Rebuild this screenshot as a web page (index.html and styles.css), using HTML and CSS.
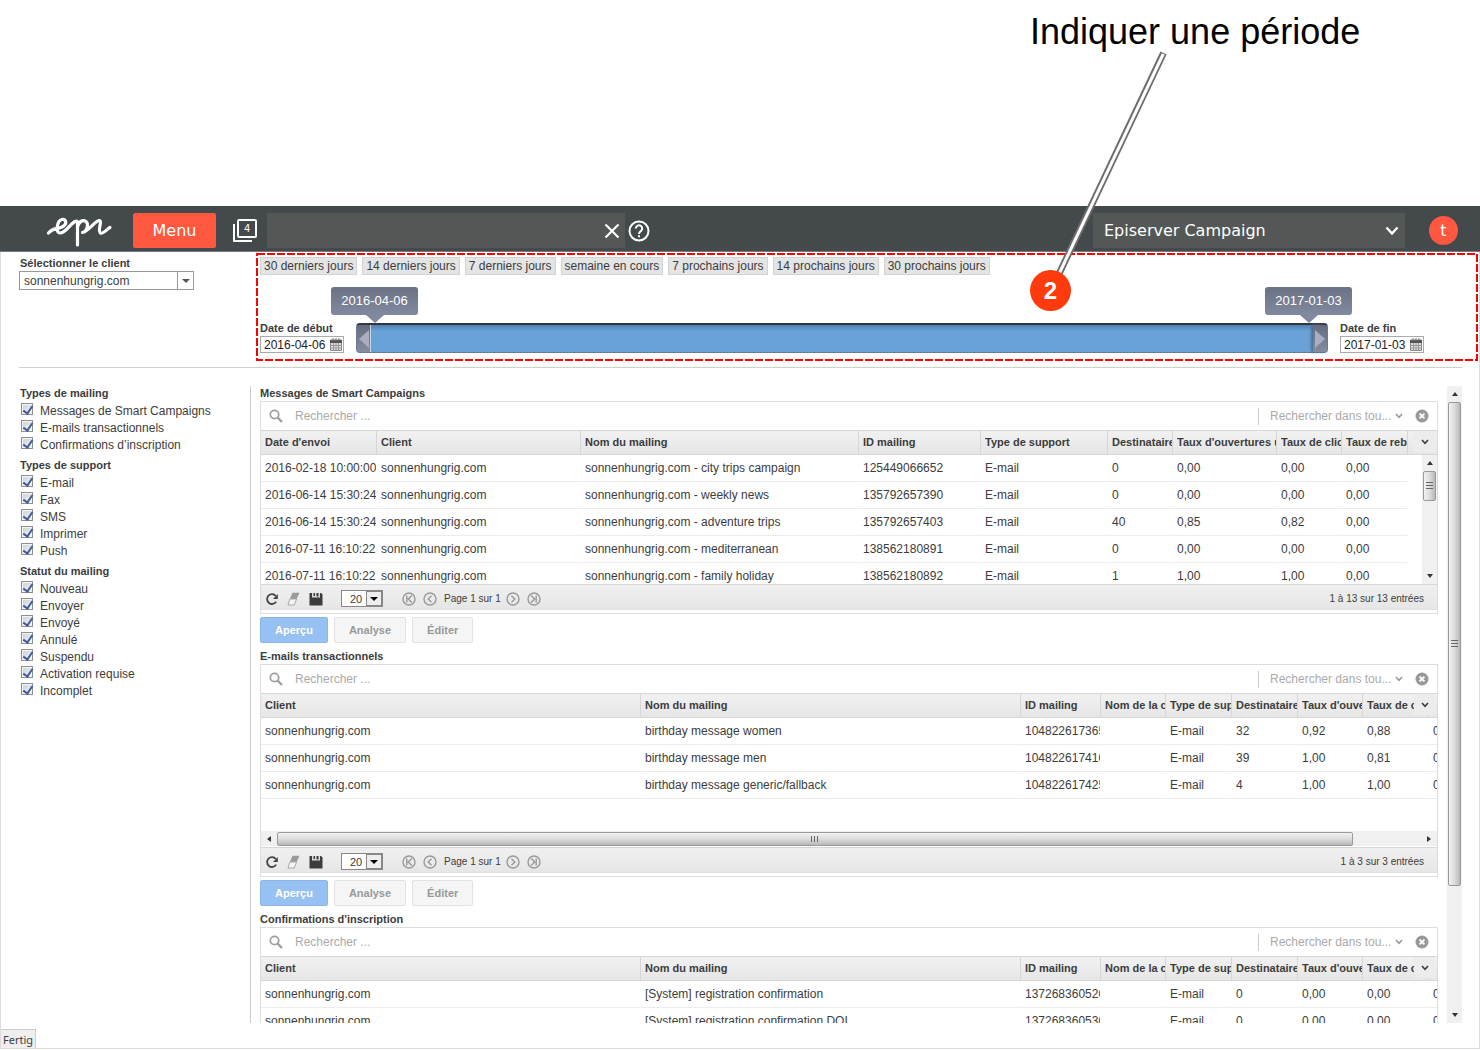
FILE: index.html
```html
<!DOCTYPE html>
<html lang="fr">
<head>
<meta charset="utf-8">
<title>Episerver Campaign</title>
<link rel="stylesheet" href="styles.css">
</head>
<body>
<svg class="sprite" aria-hidden="true">
  <symbol id="i-search" viewBox="0 0 14 14"><circle cx="5.5" cy="5.5" r="4.2" fill="none" stroke="#a0a0a0" stroke-width="1.8"/><path d="M8.6 8.6L13 13" stroke="#a0a0a0" stroke-width="2.4"/></symbol>
  <symbol id="i-clear" viewBox="0 0 14 14"><circle cx="7" cy="7" r="6.5" fill="#999"/><path d="M4.6 4.6l4.8 4.8M9.4 4.6l-4.8 4.8" stroke="#fff" stroke-width="2"/></symbol>
  <symbol id="i-chev" viewBox="0 0 8 6"><path d="M1 1l3 3.4L7 1" fill="none" stroke="currentColor" stroke-width="1.6"/></symbol>
  <symbol id="i-reload" viewBox="0 0 14 14"><path d="M11.2 9.6A4.9 4.9 0 1 1 10.8 4" fill="none" stroke="#444" stroke-width="1.8"/><path d="M12.8 2v5H8z" fill="#444"/></symbol>
  <symbol id="i-erase" viewBox="0 0 14 14"><path d="M5.5 .8h7L9.6 7H2.8z" fill="#9a9a9a"/><path d="M2.8 7h6.8L7.2 13H1z" fill="#f4f4f4" stroke="#aaa"/></symbol>
  <symbol id="i-save" viewBox="0 0 14 14"><path d="M.5 1h11.500L13.500 2.500V13.500H.5z" fill="#3c3c3c"/><path d="M3 1h8v4.500H3z" fill="#ddd"/><path d="M4.500 1h1.500v3h-1.500zM7.500 1h2v3.500h-2z" fill="#3c3c3c"/></symbol>
  <symbol id="i-first" viewBox="0 0 14 14"><g fill="none" stroke="#999" stroke-width="1.400"><circle cx="7" cy="7" r="6"/><path d="M4.800 3.500v7M9.800 3.500L6.300 7l3.500 3.500"/></g></symbol>
  <symbol id="i-prev" viewBox="0 0 14 14"><g fill="none" stroke="#999" stroke-width="1.400"><circle cx="7" cy="7" r="6"/><path d="M8.500 3.800L5.200 7l3.300 3.200"/></g></symbol>
  <symbol id="i-next" viewBox="0 0 14 14"><g fill="none" stroke="#999" stroke-width="1.400"><circle cx="7" cy="7" r="6"/><path d="M5.500 3.800L8.800 7l-3.300 3.200"/></g></symbol>
  <symbol id="i-last" viewBox="0 0 14 14"><g fill="none" stroke="#999" stroke-width="1.400"><circle cx="7" cy="7" r="6"/><path d="M9.200 3.500v7M4.200 3.500L7.700 7l-3.500 3.500"/></g></symbol>
  <symbol id="i-cal" viewBox="0 0 12 13"><path d="M.5 2h11v10.500H.5z" fill="#ddd" stroke="#888"/><path d="M0 2h12v3H0z" fill="#555"/><path d="M3 0v3M9 0v3M6 0v3" stroke="#777"/><path d="M3.500 5v7M6 5v7M8.500 5v7M1 7.500h10M1 10h10" stroke="#999"/></symbol>
</svg>

<header class="callout">
  <div class="callout-box">
    <p class="callout-text">Indiquer une période</p>
    <svg class="callout-line" viewBox="0 0 150 270" aria-hidden="true">
      <path d="M133.500 53L29 274" stroke="#6c6c6c" stroke-width="6.800"/>
      <path d="M133.200 54L29 274" stroke="#fff" stroke-width="3"/>
    </svg>
    <span class="callout-num">2</span>
  </div>
</header>

<nav class="topbar">
  <a class="logo" href="#" aria-label="epi">
    <svg width="80" height="42" viewBox="0 0 80 42" fill="none" stroke="#fff" stroke-width="3.200" stroke-linecap="round" stroke-linejoin="round"><path d="M8.500 23C14 17 16 20 22 17C28 14 26 9 22 9.500C17 10.500 15 23 20 23C26 23 30 14 35 11.500Q38 10 37.500 14V35M37.500 17C39 11 43 9.500 46 11.500C49 14 47 22 42.500 22.500C49 21 55 11 59 10.500C63 10 57 21 60.500 23C63 24.500 67 19 70 17.500"/></svg>
  </a>
  <button class="menu-btn">Menu</button>
  <svg class="pages" width="26" height="26" viewBox="0 0 26 26" fill="none" stroke="#fff" stroke-width="2" stroke-linejoin="round"><rect x="6" y="2" width="18" height="17" rx="1"/><path d="M2 6v17h18"/><text x="12" y="14" font-family="DejaVu Sans" font-size="10" fill="#fff" stroke="none">4</text></svg>
  <div class="top-search">
    <input type="text" aria-label="Recherche">
    <button class="plain" aria-label="Effacer"><svg width="16" height="16" viewBox="0 0 16 16"><path d="M1.500 1.500l13 13M14.500 1.500l-13 13" stroke="#fff" stroke-width="2.200"/></svg></button>
  </div>
  <button class="plain help" aria-label="Aide"><svg width="22" height="22" viewBox="0 0 22 22" fill="none" stroke="#fff" stroke-width="2"><circle cx="11" cy="11" r="9.500"/><path d="M7.800 8.600a3.200 3.200 0 1 1 5 2.600c-1.300.9-1.800 1.300-1.800 2.800"/><path d="M11 15.200v2"/></svg></button>
  <div class="product">
    <select aria-label="Produit"><option>Episerver Campaign</option></select>
    <svg width="14" height="10" viewBox="0 0 14 10"><path d="M1.500 1.500L7 7.500l5.500-6" fill="none" stroke="#fff" stroke-width="2.400"/></svg>
  </div>
  <button class="avatar">t</button>
</nav>

<main class="app">
  <div class="filters">
    <div class="client">
      <label class="cap" for="client">Sélectionner le client</label>
      <div class="combo"><select id="client"><option>sonnenhungrig.com</option></select><span class="combo-arrow"></span></div>
    </div>
    <section class="period">
      <svg class="dash" aria-hidden="true"><rect x="1" y="1"/></svg>
      <div class="ranges">
        <button>30 derniers jours</button><button>14 derniers jours</button><button>7 derniers jours</button><button>semaine en cours</button><button>7 prochains jours</button><button>14 prochains jours</button><button>30 prochains jours</button>
      </div>
      <div class="slider-row">
        <div class="date"><label class="cap" for="d1">Date de début</label><div class="date-box"><input id="d1" type="text" value="2016-04-06"><svg width="12" height="13"><use href="#i-cal"/></svg></div></div>
        <div class="track">
          <output class="tip tip-start">2016-04-06</output>
          <output class="tip tip-end">2017-01-03</output>
          <button class="handle" aria-label="Début"><svg width="10" height="18" viewBox="0 0 10 18"><path d="M10 0v18L0 9z" fill="#a9afc0"/></svg></button>
          <button class="handle handle-end" aria-label="Fin"><svg width="10" height="18" viewBox="0 0 10 18"><path d="M0 0v18L10 9z" fill="#a9afc0"/></svg></button>
        </div>
        <div class="date"><label class="cap" for="d2">Date de fin</label><div class="date-box"><input id="d2" type="text" value="2017-01-03"><svg width="12" height="13"><use href="#i-cal"/></svg></div></div>
      </div>
    </section>
  </div>
  <hr class="rule">

  <div class="workspace">
    <aside class="side">
      <fieldset><legend>Types de mailing</legend>
        <label><input type="checkbox" checked>Messages de Smart Campaigns</label>
        <label><input type="checkbox" checked>E-mails transactionnels</label>
        <label><input type="checkbox" checked>Confirmations d’inscription</label>
      </fieldset>
      <fieldset><legend>Types de support</legend>
        <label><input type="checkbox" checked>E-mail</label>
        <label><input type="checkbox" checked>Fax</label>
        <label><input type="checkbox" checked>SMS</label>
        <label><input type="checkbox" checked>Imprimer</label>
        <label><input type="checkbox" checked>Push</label>
      </fieldset>
      <fieldset><legend>Statut du mailing</legend>
        <label><input type="checkbox" checked>Nouveau</label>
        <label><input type="checkbox" checked>Envoyer</label>
        <label><input type="checkbox" checked>Envoyé</label>
        <label><input type="checkbox" checked>Annulé</label>
        <label><input type="checkbox" checked>Suspendu</label>
        <label><input type="checkbox" checked>Activation requise</label>
        <label><input type="checkbox" checked>Incomplet</label>
      </fieldset>
    </aside>

    <div class="lists">
      <section class="list">
        <h2>Messages de Smart Campaigns</h2>
        <div class="grid">
          <div class="find">
            <svg width="14" height="14"><use href="#i-search"/></svg>
            <input type="text" placeholder="Rechercher ..." aria-label="Rechercher">
            <div class="scope"><select aria-label="Champ"><option>Rechercher dans tou...</option></select><svg width="8" height="6"><use href="#i-chev"/></svg></div>
            <button class="plain" aria-label="Effacer"><svg width="14" height="14"><use href="#i-clear"/></svg></button>
          </div>
          <div class="view">
            <table>
              <colgroup><col class="w116"><col class="w204"><col><col class="w122"><col class="w127"><col class="w65"><col class="w104"><col class="w65"><col class="w66"><col class="w29"></colgroup>
              <thead><tr><th>Date d'envoi</th><th>Client</th><th>Nom du mailing</th><th>ID mailing</th><th>Type de support</th><th>Destinataires</th><th>Taux d'ouvertures uniques</th><th>Taux de clics</th><th>Taux de rebonds</th><th></th></tr></thead>
              <tbody>
                <tr><td>2016-02-18 10:00:00</td><td>sonnenhungrig.com</td><td>sonnenhungrig.com - city trips campaign</td><td>125449066652</td><td>E-mail</td><td>0</td><td>0,00</td><td>0,00</td><td>0,00</td></tr>
                <tr><td>2016-06-14 15:30:24</td><td>sonnenhungrig.com</td><td>sonnenhungrig.com - weekly news</td><td>135792657390</td><td>E-mail</td><td>0</td><td>0,00</td><td>0,00</td><td>0,00</td></tr>
                <tr><td>2016-06-14 15:30:24</td><td>sonnenhungrig.com</td><td>sonnenhungrig.com - adventure trips</td><td>135792657403</td><td>E-mail</td><td>40</td><td>0,85</td><td>0,82</td><td>0,00</td></tr>
                <tr><td>2016-07-11 16:10:22</td><td>sonnenhungrig.com</td><td>sonnenhungrig.com - mediterranean</td><td>138562180891</td><td>E-mail</td><td>0</td><td>0,00</td><td>0,00</td><td>0,00</td></tr>
                <tr><td>2016-07-11 16:10:22</td><td>sonnenhungrig.com</td><td>sonnenhungrig.com - family holiday</td><td>138562180892</td><td>E-mail</td><td>1</td><td>1,00</td><td>1,00</td><td>0,00</td></tr>
              </tbody>
            </table>
            <button class="plain cols" aria-label="Colonnes"><svg width="8" height="6"><use href="#i-chev"/></svg></button>
            <div class="vbar inner"><span class="tri up"></span><span class="thumb short"><i class="grip"></i></span><span class="tri down"></span></div>
          </div>
          <div class="tools">
            <button class="plain" aria-label="Actualiser"><svg width="14" height="14"><use href="#i-reload"/></svg></button>
            <button class="plain" aria-label="Vider"><svg width="14" height="14"><use href="#i-erase"/></svg></button>
            <button class="plain" aria-label="Enregistrer"><svg width="14" height="14"><use href="#i-save"/></svg></button>
            <div class="size"><select aria-label="Lignes"><option>20</option></select><span class="size-arrow"></span></div>
            <div class="pager"><button class="plain" aria-label="Première"><svg width="14" height="14"><use href="#i-first"/></svg></button><button class="plain" aria-label="Précédente"><svg width="14" height="14"><use href="#i-prev"/></svg></button><span>Page 1 sur 1</span><button class="plain" aria-label="Suivante"><svg width="14" height="14"><use href="#i-next"/></svg></button><button class="plain last" aria-label="Dernière"><svg width="14" height="14"><use href="#i-last"/></svg></button></div>
            <span class="count">1 à 13 sur 13 entrées</span>
          </div>
        </div>
        <div class="actions"><button class="main">Aperçu</button><button>Analyse</button><button>Éditer</button></div>
      </section>

      <section class="list">
        <h2>E-mails transactionnels</h2>
        <div class="grid">
          <div class="find">
            <svg width="14" height="14"><use href="#i-search"/></svg>
            <input type="text" placeholder="Rechercher ..." aria-label="Rechercher">
            <div class="scope"><select aria-label="Champ"><option>Rechercher dans tou...</option></select><svg width="8" height="6"><use href="#i-chev"/></svg></div>
            <button class="plain" aria-label="Effacer"><svg width="14" height="14"><use href="#i-clear"/></svg></button>
          </div>
          <div class="view">
            <table class="wide">
              <colgroup><col><col><col class="w80"><col class="w65"><col class="w66"><col class="w66"><col class="w65"><col class="w66"><col class="w65"></colgroup>
              <thead><tr><th>Client</th><th>Nom du mailing</th><th>ID mailing</th><th>Nom de la campagne</th><th>Type de support</th><th>Destinataires</th><th>Taux d'ouvertures</th><th>Taux de clics</th><th></th></tr></thead>
              <tbody>
                <tr><td>sonnenhungrig.com</td><td>birthday message women</td><td>104822617365</td><td></td><td>E-mail</td><td>32</td><td>0,92</td><td>0,88</td><td>0,00</td></tr>
                <tr><td>sonnenhungrig.com</td><td>birthday message men</td><td>104822617410</td><td></td><td>E-mail</td><td>39</td><td>1,00</td><td>0,81</td><td>0,00</td></tr>
                <tr><td>sonnenhungrig.com</td><td>birthday message generic/fallback</td><td>104822617425</td><td></td><td>E-mail</td><td>4</td><td>1,00</td><td>1,00</td><td>0,00</td></tr>
              </tbody>
            </table>
            <button class="plain cols" aria-label="Colonnes"><svg width="8" height="6"><use href="#i-chev"/></svg></button>
            <div class="hbar"><span class="tri left"></span><span class="hthumb"><i class="grip side-grip"></i></span><span class="tri right"></span></div>
          </div>
          <div class="tools">
            <button class="plain" aria-label="Actualiser"><svg width="14" height="14"><use href="#i-reload"/></svg></button>
            <button class="plain" aria-label="Vider"><svg width="14" height="14"><use href="#i-erase"/></svg></button>
            <button class="plain" aria-label="Enregistrer"><svg width="14" height="14"><use href="#i-save"/></svg></button>
            <div class="size"><select aria-label="Lignes"><option>20</option></select><span class="size-arrow"></span></div>
            <div class="pager"><button class="plain" aria-label="Première"><svg width="14" height="14"><use href="#i-first"/></svg></button><button class="plain" aria-label="Précédente"><svg width="14" height="14"><use href="#i-prev"/></svg></button><span>Page 1 sur 1</span><button class="plain" aria-label="Suivante"><svg width="14" height="14"><use href="#i-next"/></svg></button><button class="plain last" aria-label="Dernière"><svg width="14" height="14"><use href="#i-last"/></svg></button></div>
            <span class="count">1 à 3 sur 3 entrées</span>
          </div>
        </div>
        <div class="actions"><button class="main">Aperçu</button><button>Analyse</button><button>Éditer</button></div>
      </section>

      <section class="list">
        <h2>Confirmations d'inscription</h2>
        <div class="grid">
          <div class="find">
            <svg width="14" height="14"><use href="#i-search"/></svg>
            <input type="text" placeholder="Rechercher ..." aria-label="Rechercher">
            <div class="scope"><select aria-label="Champ"><option>Rechercher dans tou...</option></select><svg width="8" height="6"><use href="#i-chev"/></svg></div>
            <button class="plain" aria-label="Effacer"><svg width="14" height="14"><use href="#i-clear"/></svg></button>
          </div>
          <div class="view">
            <table class="wide">
              <colgroup><col><col><col class="w80"><col class="w65"><col class="w66"><col class="w66"><col class="w65"><col class="w66"><col class="w65"></colgroup>
              <thead><tr><th>Client</th><th>Nom du mailing</th><th>ID mailing</th><th>Nom de la campagne</th><th>Type de support</th><th>Destinataires</th><th>Taux d'ouvertures</th><th>Taux de clics</th><th></th></tr></thead>
              <tbody>
                <tr><td>sonnenhungrig.com</td><td>[System] registration confirmation</td><td>137268360520</td><td></td><td>E-mail</td><td>0</td><td>0,00</td><td>0,00</td><td>0,00</td></tr>
                <tr><td>sonnenhungrig.com</td><td>[System] registration confirmation DOI</td><td>137268360530</td><td></td><td>E-mail</td><td>0</td><td>0,00</td><td>0,00</td><td>0,00</td></tr>
              </tbody>
            </table>
            <button class="plain cols" aria-label="Colonnes"><svg width="8" height="6"><use href="#i-chev"/></svg></button>
          </div>
        </div>
      </section>
    </div>

    <div class="vbar outer"><span class="tri up"></span><span class="thumb long"><i class="grip"></i></span><span class="tri down"></span></div>
  </div>
  <footer class="status"><span>Fertig</span></footer>
</main>
</body>
</html>
```
FILE: styles.css
```css
* { box-sizing: border-box; }
body {
  margin: 0;
  height: 100vh;
  padding-bottom: 1px;
  display: flex;
  flex-direction: column;
  background: #fff;
  color: #3c3c3c;
  font: 12px/16px "Liberation Sans", Arial, sans-serif;
}
button, input, select { font: inherit; color: inherit; margin: 0; }
select { appearance: none; border: 0; padding: 0; background: transparent; outline: 0; border-radius: 0; }
svg { display: block; flex: none; }
.sprite { position: absolute; width: 0; height: 0; }
.plain { border: 0; padding: 0; background: none; display: flex; flex: none; }

/* Annotation */
.callout { height: 206px; flex: none; display: flex; justify-content: flex-end; padding-right: 119px; }
.callout-box { position: relative; width: 331px; }
.callout-text { margin: 0; padding-top: 11px; font-size: 36px; line-height: 42px; color: #000; white-space: nowrap; }
.callout-line { position: absolute; left: 0; top: 0; width: 150px; height: 270px; overflow: visible; z-index: 5; }
.callout-num {
  position: absolute; left: 0; top: 270px; z-index: 6;
  width: 41px; height: 41px; border-radius: 50%;
  background: #ff3a0c; color: #fff; font-weight: bold; font-size: 24px; line-height: 42px; text-align: center;
}

/* Top bar */
.topbar {
  flex: none; height: 46px; display: flex; align-items: center; padding: 4px 22px 0 40px;
  background: #44494b; border-bottom: 1px solid #777b7c;
  font-family: "DejaVu Sans", Verdana, sans-serif; font-size: 16px; color: #fff;
}
.logo { margin-right: 13px; }
.menu-btn { width: 83px; height: 35px; border: 0; border-radius: 2px; background: #ff5740; }
.pages { margin-left: 16px; }
.top-search { margin-left: 9px; width: 358px; height: 35px; background: #535756; display: flex; align-items: center; padding-right: 5px; }
.top-search input { flex: 1; min-width: 0; height: 35px; border: 0; background: none; }
.help { margin-left: 3px; }
.product { margin-left: auto; width: 312px; height: 35px; background: #535756; display: flex; align-items: center; padding: 0 6px 0 11px; }
.product select { flex: 1; min-width: 0; }
.avatar { margin-left: 24px; width: 29px; height: 29px; border: 0; padding: 0; border-radius: 50%; background: #ff5740; line-height: 29px; }

/* Frame */
.app { flex: 1; min-height: 0; display: flex; flex-direction: column; border: 1px solid #dcdcdc; border-top: 0; }
.cap { display: block; font-size: 11px; line-height: 15px; font-weight: bold; white-space: nowrap; }

/* Filters */
.filters { flex: none; display: grid; grid-template-columns: 255px 1fr; padding: 1px 1px 0 0; }
.client { padding: 3px 0 0 18px; }
.client .cap { padding-left: 1px; }
.combo { width: 175px; height: 19px; border: 1px solid #999; display: flex; }
.combo select { flex: 1; padding-left: 4px; }
.combo-arrow { width: 16px; border-left: 1px solid #999; display: grid; place-items: center; }
.combo-arrow::after { content: ""; border: 4px solid transparent; border-top-color: #555; border-bottom: 0; }
.period { position: relative; height: 108px; padding: 4px 4px 8px; display: flex; flex-direction: column; justify-content: space-between; }
.dash { position: absolute; inset: 0; width: 100%; height: 100%; pointer-events: none; }
.dash rect { width: calc(100% - 2px); height: calc(100% - 2px); fill: none; stroke: #f00; stroke-width: 2; stroke-dasharray: 8 2; }
.ranges { display: flex; gap: 5px; }
.ranges button { height: 18px; padding: 0 3px; border: 1px solid #d3d3d3; background: #e4e4e4; line-height: 16px; white-space: nowrap; }
.slider-row { display: flex; align-items: flex-end; padding-right: 50px; }
.date { flex: none; }
.date-box { width: 84px; height: 17px; border: 1px solid #aaa; display: flex; align-items: center; justify-content: space-between; padding: 0 1px 0 3px; color: #222; }
.date-box input { width: 64px; border: 0; padding: 0; background: none; height: 15px; }
.track {
  position: relative; flex: 1; height: 30px; margin: 0 12px; border-radius: 4px;
  display: flex; justify-content: space-between; border: 1px solid #6a7a92; border-top: 2px solid #33383f;
  background: linear-gradient(#4d80b0, #69a2d8 6px, #69a2d8);
}
.handle { width: 14px; padding: 0; border: 0; border-right: 1px solid #cfd5e0; border-radius: 3px 0 0 3px; background: linear-gradient(#646c7e, #858ca0); display: grid; place-items: center; }
.handle-end { border-right: 0; border-radius: 0 3px 3px 0; box-shadow: -2px 0 3px #4d6c90; }
.tip { position: absolute; bottom: 37px; width: 87px; height: 28px; border-radius: 3px; background: linear-gradient(#6a7284, #8189a0); color: #fff; font-size: 13px; text-align: center; line-height: 28px; }
.tip::after { content: ""; position: absolute; left: 35px; top: 100%; border: 9px solid transparent; border-top: 8px solid #8189a0; border-bottom: 0; }
.tip-start { left: -26px; }
.tip-end { right: -25px; }
.rule { flex: none; width: auto; margin: 6px 17px 18px 18px; border: 0; border-top: 1px solid #d0d0d0; align-self: stretch; }

/* Workspace */
.workspace { flex: 1; min-height: 0; display: flex; overflow: hidden; padding-right: 17px; }
.side { flex: none; width: 249px; padding-left: 19px; }
.side fieldset { border: 0; margin: 0 0 4px; padding: 0; min-width: 0; }
.side legend { padding: 0; margin-bottom: 2px; font-size: 11px; line-height: 15px; font-weight: bold; }
.side label { display: flex; gap: 7px; height: 17px; line-height: 17px; padding-left: 1px; }
.side input { appearance: none; position: relative; width: 12px; height: 12px; border: 1px solid #8e8f8f; background: linear-gradient(135deg, #c8ced6, #f6f6f6); box-shadow: inset 0 0 0 1px #f4f4f4; }
.side input:checked::after { content: ""; position: absolute; left: 3px; top: 0; width: 4px; height: 8px; border: solid #3c5c9c; border-width: 0 2px 2px 0; transform: rotate(35deg); }
.lists { flex: 1; min-width: 0; overflow: hidden; border-left: 1px solid #ccc; padding: 0 9px; }
.list h2 { margin: 0; font-size: 11px; line-height: 15px; }
.grid { border: 1px solid #ddd; padding-bottom: 3px; }
.find { height: 28px; display: flex; align-items: center; padding: 0 8px; }
.find > input { flex: 1; min-width: 0; border: 0; padding: 0; margin-left: 12px; background: none; outline: 0; }
.find > input::placeholder { color: #aaa; opacity: 1; }
.scope { display: flex; align-items: center; gap: 1px; margin-right: 12px; padding-left: 11px; height: 17px; border-left: 1px solid #ccc; color: #aaa; }
.scope select { width: 124px; }
.scope svg { color: #999; }
.view { position: relative; height: 154px; overflow: hidden; }
table { width: 100%; table-layout: fixed; border-collapse: separate; border-spacing: 0; }
table.wide { width: calc(100% + 57px); }
th, td { padding: 0 0 0 4px; overflow: hidden; white-space: nowrap; text-align: left; border-right: 1px solid #fff; }
th { height: 25px; font-size: 11px; line-height: 15px; border-top: 1px solid #d6d6d6; border-bottom: 1px solid #d6d6d6; border-right-color: #d6d6d6; background: linear-gradient(#f1f1f1, #e6e6e6); }
th:last-child { border-right: 0; }
td { height: 27px; border-bottom: 1px solid #ececec; }
.w29 { width: 29px; } .w65 { width: 65px; } .w66 { width: 66px; } .w80 { width: 80px; } .w104 { width: 104px; }
.w116 { width: 116px; } .w122 { width: 122px; } .w127 { width: 127px; } .w204 { width: 204px; }
.cols { position: absolute; right: 2px; top: 1px; width: 21px; height: 21px; align-items: center; justify-content: center; background: #ececec; }

/* Scroll bars */
.vbar { display: flex; flex-direction: column; align-items: center; background: #f0f0f0; }
.inner { position: absolute; right: 0; top: 25px; bottom: 0; width: 15px; }
.outer { flex: none; width: 15px; }
.tri { border: 3px solid transparent; flex: none; }
.up { margin: 6px 0; border-bottom: 4px solid #333; border-top: 0; }
.down { margin: auto 0 6px; border-top: 4px solid #333; border-bottom: 0; }
.thumb { width: 13px; border: 1px solid #9a9a9a; border-radius: 2px; background: linear-gradient(90deg, #f2f2f2, #dcdcdc 50%, #b8b8ba); display: grid; place-items: center; }
.short { height: 30px; }
.long { height: 76%; }
.grip { width: 7px; height: 8px; background: repeating-linear-gradient(#666 0 1px, transparent 1px 3px); }
.side-grip { width: 8px; height: 6px; background: repeating-linear-gradient(90deg, #666 0 1px, transparent 1px 3px); }
.hbar { position: absolute; left: 0; right: 0; bottom: 1px; height: 15px; display: flex; align-items: center; background: #f0f0f0; }
.left { margin: 0 6px; border-right: 4px solid #333; border-left: 0; }
.right { margin: 0 6px 0 auto; border-left: 4px solid #333; border-right: 0; }
.hthumb { width: 92%; max-width: calc(100% - 100px); height: 14px; border: 1px solid #9a9a9a; border-radius: 2px; background: linear-gradient(#f2f2f2, #dcdcdc 50%, #b8b8ba); display: grid; place-items: center; }

/* Table footer */
.tools { height: 26px; display: flex; align-items: center; gap: 8px; padding: 3px 13px 0 4px; border-top: 1px solid #d6d6d6; border-bottom: 1px solid #e0e0e0; background: linear-gradient(#f0f0f0, #e6e6e6); font-size: 10px; }
.size { width: 42px; height: 17px; margin-left: 10px; border: 1px solid #888; background: #fff; display: flex; font-size: 11px; }
.size select { flex: 1; min-width: 0; padding-left: 8px; }
.size-arrow { width: 16px; border: 1px solid #888; background: #eee; display: grid; place-items: center; }
.size-arrow::after { content: ""; border: 4px solid transparent; border-top-color: #000; border-bottom: 0; }
.pager { display: flex; align-items: center; gap: 7px; margin-left: 11px; }
.pager span { white-space: nowrap; }
.pager .plain:nth-of-type(3) { margin-left: -2px; }
.count { margin-left: auto; white-space: nowrap; }
.actions { display: flex; gap: 6px; padding: 3px 0 6px; }
.actions button { height: 26px; padding: 0 14px; border: 1px solid #e2e2e2; border-radius: 2px; background: #f5f5f5; color: #999; font-size: 11px; font-weight: bold; }
.actions .main { background: #98c1f3; border-color: #8ab6ea; color: #fff; }

/* Status bar */
.status { flex: none; margin-top: 6px; display: flex; }
.status span { height: 19px; padding: 0 2px; border: 1px solid #ccc; border-width: 1px 1px 0 0; background: #efefef; font: 11px/20px "Noto Sans", sans-serif; }
```
